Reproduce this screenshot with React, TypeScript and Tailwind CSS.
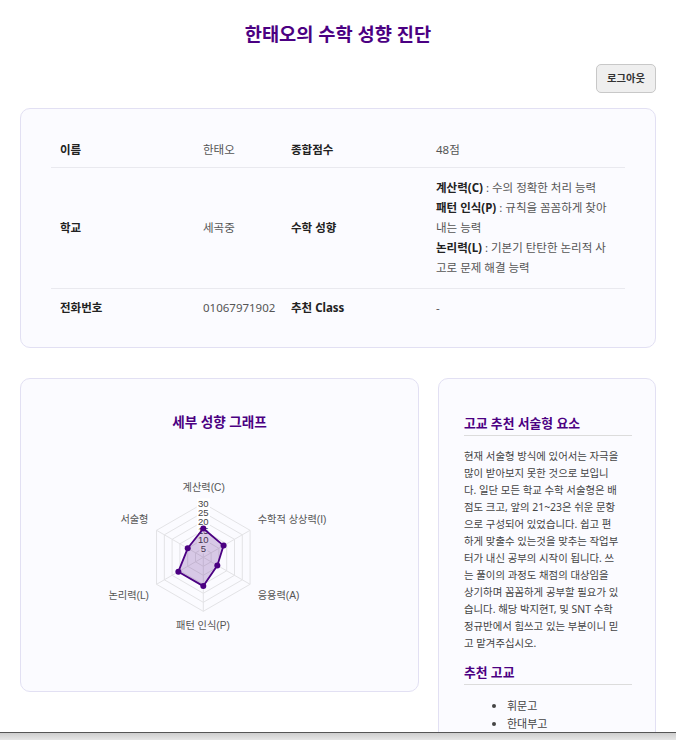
import React from "react";

const SCORES = [
  { label: "계산력(C)", value: 16, x: 182.7, y: 47.7, anchor: "middle" },
  { label: "수학적 상상력(I)", value: 13, x: 236.7, y: 79, anchor: "start" },
  { label: "응용력(A)", value: 9, x: 236.7, y: 155, anchor: "start" },
  { label: "패턴 인식(P)", value: 16, x: 182, y: 185.7, anchor: "middle" },
  { label: "논리력(L)", value: 16, x: 128, y: 155, anchor: "end" },
  { label: "서술형", value: 10, x: 127.5, y: 79, anchor: "end" },
];

const TICKS = [5, 10, 15, 20, 25, 30];

const CX = 182.3;
const CY = 117.3;
const R = 54;
const MAX = 30;

function pt(i: number, r: number) {
  const a = ((-90 + 60 * i) * Math.PI) / 180;
  return [CX + r * Math.cos(a), CY + r * Math.sin(a)];
}

function ring(r: number) {
  return SCORES.map((_, i) => pt(i, r).join(",")).join(" ");
}

function RadarChart() {
  const data = SCORES.map((s, i) => pt(i, (s.value / MAX) * R));
  const font = "Liberation Sans, Noto Sans CJK KR, sans-serif";
  return (
    <svg width="397" height="238" viewBox="0 0 397 238" className="block">
      {/* grid */}
      {TICKS.map((t) => (
        <polygon key={t} points={ring((t / MAX) * R)} fill="none" stroke="#e3e3e6" strokeWidth="1" />
      ))}
      {SCORES.map((_, i) => {
        const [x, y] = pt(i, R);
        return <line key={i} x1={CX} y1={CY} x2={x} y2={y} stroke="#e3e3e6" strokeWidth="1" />;
      })}
      {/* ticks */}
      {TICKS.map((t) => {
        const y = CY - (t / MAX) * R;
        const w = t < 10 ? 8 : 13;
        return (
          <g key={t}>
            <rect x={CX - w / 2} y={y - 5} width={w} height={10} fill="#ffffff" />
            <text x={CX} y={y} textAnchor="middle" dominantBaseline="central" fontSize="9.5" fill="#444" fontFamily={font}>
              {t}
            </text>
          </g>
        );
      })}
      {/* dataset */}
      <polygon
        points={data.map((p) => p.join(",")).join(" ")}
        fill="rgba(75,0,130,0.2)"
        stroke="#4b0082"
        strokeWidth="1.8"
        strokeLinejoin="round"
      />
      {data.map(([x, y], i) => (
        <circle key={i} cx={x} cy={y} r="3" fill="#4b0082" />
      ))}
      {/* point labels */}
      {SCORES.map((s) => (
        <text
          key={s.label}
          x={s.x}
          y={s.y}
          textAnchor={s.anchor as "middle" | "start" | "end"}
          dominantBaseline="central"
          fontSize="10.2"
          fill="#555"
          fontFamily={font}
        >
          {s.label}
        </text>
      ))}
    </svg>
  );
}

const ESSAY = [
  "현재 서술형 방식에 있어서는 자극을",
  "많이 받아보지 못한 것으로 보입니",
  "다. 일단 모든 학교 수학 서술형은 배",
  "점도 크고, 앞의 21~23은 쉬운 문항",
  "으로 구성되어 있었습니다. 쉽고 편",
  "하게 맞출수 있는것을 맞추는 작업부",
  "터가 내신 공부의 시작이 됩니다. 쓰",
  "는 풀이의 과정도 채점의 대상임을",
  "상기하며 꼼꼼하게 공부할 필요가 있",
  "습니다. 해당 박지현T, 및 SNT 수학",
  "정규반에서 힘쓰고 있는 부분이니 믿",
  "고 맡겨주십시오.",
];

export default function App() {
  const label = "text-[#222] font-bold";
  const value = "text-[#555]";
  return (
    <div className="h-[740px] overflow-hidden bg-white relative font-['Noto_Sans','Noto_Sans_CJK_KR',sans-serif]">
      <div className="px-5">
        <h1 className="pt-[22px] text-center text-[18.7px] font-bold leading-[24px] text-[#4b0082]">
          한태오의 수학 성향 진단
        </h1>

        <div className="flex justify-end mt-[18px]">
          <button className="h-[29px] w-[60px] rounded-[5px] border border-[#c8c8c8] bg-[#efefef] text-[10.3px] font-semibold text-[#333]">
            로그아웃
          </button>
        </div>

        {/* Student info */}
        <div className="mt-[15px] rounded-[10px] border border-[#e2e0f3] bg-[#fbfbff] px-[30px] pt-[21px] pb-[19px]">
          <table className="w-full table-fixed border-separate border-spacing-0 text-[11.5px] leading-[20px]">
            <colgroup>
              <col className="w-[143px]" />
              <col className="w-[88px]" />
              <col className="w-[145px]" />
              <col />
            </colgroup>
            <tbody>
              <tr>
                <td className={`pl-[9px] pt-[10px] pb-[7px] border-b border-[#e9e9ef] ${label}`}>이름</td>
                <td className={`pl-[9px] pt-[10px] pb-[7px] border-b border-[#e9e9ef] ${value}`}>한태오</td>
                <td className={`pl-[9px] pt-[10px] pb-[7px] border-b border-[#e9e9ef] ${label}`}>종합점수</td>
                <td className={`pl-[9px] pt-[10px] pb-[7px] border-b border-[#e9e9ef] ${value}`}>48점</td>
              </tr>
              <tr>
                <td className={`pl-[9px] py-[10px] border-b border-[#e9e9ef] ${label}`}>학교</td>
                <td className={`pl-[9px] py-[10px] border-b border-[#e9e9ef] ${value}`}>세곡중</td>
                <td className={`pl-[9px] py-[10px] border-b border-[#e9e9ef] ${label}`}>수학 성향</td>
                <td className={`pl-[9px] py-[10px] border-b border-[#e9e9ef] whitespace-nowrap ${value}`}>
                  <span className="font-bold text-[#222]">계산력(C)</span> : 수의 정확한 처리 능력
                  <br />
                  <span className="font-bold text-[#222]">패턴 인식(P)</span> : 규칙을 꼼꼼하게 찾아
                  <br />
                  내는 능력
                  <br />
                  <span className="font-bold text-[#222]">논리력(L)</span> : 기본기 탄탄한 논리적 사
                  <br />
                  고로 문제 해결 능력
                </td>
              </tr>
              <tr>
                <td className={`pl-[9px] pt-[9px] pb-[10px] ${label}`}>전화번호</td>
                <td className={`pl-[9px] pt-[9px] pb-[10px] ${value}`}>01067971902</td>
                <td className={`pl-[9px] pt-[9px] pb-[10px] ${label}`}>추천 Class</td>
                <td className={`pl-[9px] pt-[9px] pb-[10px] ${value}`}>-</td>
              </tr>
            </tbody>
          </table>
        </div>

        <div className="mt-[30px] flex items-start gap-[19px]">
          {/* Radar chart card */}
          <div className="w-[399px] h-[314px] shrink-0 rounded-[10px] border border-[#e2e0f3] bg-[#fbfbff] pt-[34px]">
            <h3 className="text-center text-[13.6px] font-bold leading-[18px] text-[#4b0082]">세부 성향 그래프</h3>
            <div className="mt-[9px]">
              <RadarChart />
            </div>
          </div>

          {/* Recommendation card */}
          <div className="flex-1 h-[400px] rounded-[10px] border border-[#e2e0f3] bg-[#fbfbff] pl-[25px] pr-[23px] pt-[35px]">
            <h3 className="pb-[3px] border-b border-[#dcdcdc] text-[12.8px] font-bold leading-[18px] text-[#4b0082]">
              고교 추천 서술형 요소
            </h3>
            <p className="mt-[12px] text-[10.4px] leading-[17px] text-[#444] whitespace-nowrap">
              {ESSAY.map((line, i) => (
                <span key={i} className="block">
                  {line}
                </span>
              ))}
            </p>
            <h3 className="mt-[11px] pb-[3px] border-b border-[#dcdcdc] text-[12.8px] font-bold leading-[18px] text-[#4b0082]">
              추천 고교
            </h3>
            <ul className="mt-[12px] list-disc pl-[43px] text-[11px] leading-[17.6px] text-[#444]">
              <li>휘문고</li>
              <li>한대부고</li>
            </ul>
          </div>
        </div>
      </div>

      {/* bottom scroll bar strip */}
      <div className="absolute bottom-0 left-0 right-0 h-[8px] border-t border-[#555] bg-gradient-to-b from-[#cdcdcd] to-[#e6e6e6]" />
    </div>
  );
}
